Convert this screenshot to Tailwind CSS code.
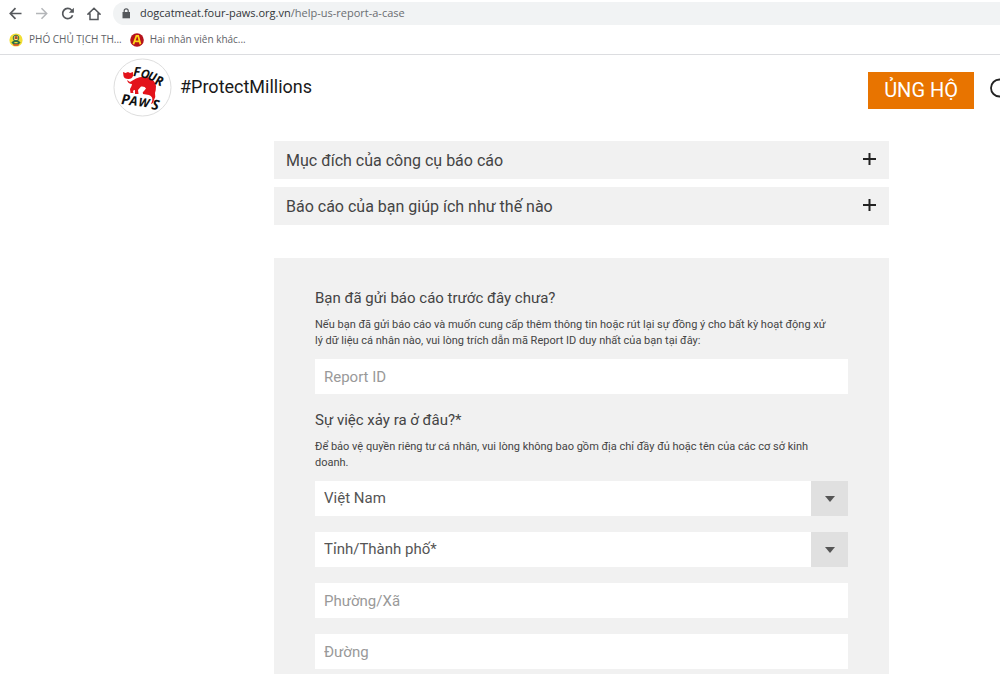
<!DOCTYPE html>
<html lang="vi">
<head>
    <meta charset="UTF-8">
    <meta name="viewport" content="width=device-width, initial-scale=1.0">
    <title>FOUR PAWS - Help us report a case</title>
    <script src="https://cdn.jsdelivr.net/npm/@tailwindcss/browser@4"></script>
</head>
<body class="min-h-screen flex flex-col bg-white text-[#444] font-[Roboto,sans-serif]">

    <!-- Browser toolbar -->
    <div class="shrink-0 border-b border-[#dcdde0] font-['Open_Sans',sans-serif]">
        <div class="h-[27px] flex items-center pl-[9px]">
            <div class="flex items-center gap-3 text-[#55585c]">
                <button aria-label="Back">
                    <svg class="w-[14px] h-[14px] block" viewBox="0 0 14 14" fill="none" stroke="currentColor" stroke-width="1.7"><path d="M12.5 6.5H2M6.5 1.2L1.3 6.5L6.5 11.8"/></svg>
                </button>
                <button aria-label="Forward" class="text-[#b4b6b9]">
                    <svg class="w-[14px] h-[14px] block" viewBox="0 0 14 14" fill="none" stroke="currentColor" stroke-width="1.5"><path d="M1 6.5H11.5M6.5 1.2L11.7 6.5L6.5 11.8"/></svg>
                </button>
                <button aria-label="Reload">
                    <svg class="w-[14px] h-[14px] block" viewBox="0 0 14 14" fill="none" stroke="currentColor" stroke-width="1.7"><path d="M11.6 8.2A5.1 5.1 0 1 1 10.6 3.2L12 4.5"/><path d="M12.9 .8V5.8H7.9Z" fill="currentColor" stroke="none"/></svg>
                </button>
                <button aria-label="Home">
                    <svg class="w-[14px] h-[14px] block" viewBox="0 0 14 14" fill="none" stroke="currentColor" stroke-width="1.5"><path d="M1 7.1L7 1.2L13 7.1H11V12.5H3V7.1Z"/></svg>
                </button>
            </div>
            <div class="flex-1 h-[23px] ml-3 pl-2 flex items-center gap-2 rounded-l-full bg-[#f1f3f4]">
                <svg class="w-[11px] h-3" viewBox="0 0 11 12" fill="#55585c"><path d="M1.5 4H9V10.3H1.5Z"/><path d="M3.2 4.5V2.8A2 2 0 0 1 7.2 2.8V4.5" fill="none" stroke="#55585c" stroke-width="1.2"/></svg>
                <span class="text-[11px] text-[#333639]">dogcatmeat.four-paws.org.vn<span class="text-[#6a6d71]">/help-us-report-a-case</span></span>
            </div>
        </div>
        <nav class="h-[27px] flex items-center pb-[2px] pl-[9px] gap-2 text-[10px] text-[#5f6368]">
            <a href="#" class="flex items-center gap-[6px]">
                <svg class="w-[14px] h-[14px]" viewBox="0 0 14 14"><circle cx="7" cy="7" r="6.6" fill="#f2df35"/><circle cx="7" cy="5" r="2.8" fill="#f7f08a" stroke="#2f6f45" stroke-width="1"/><path d="M5.6 4L7 2.6L8.6 4V6H5.6Z" fill="#b5502b"/><path d="M2.4 9.4L4.6 7.4H9.4L11.6 9.4L9.6 11.4H4.4Z" fill="#2f6f45"/><path d="M5.4 9H8.6V10.2H5.4Z" fill="#f2df35"/><path d="M3.8 11.2H10.2L9.2 12.8H4.8Z" fill="#d6442a"/></svg>
                <span>PHÓ CHỦ TỊCH TH...</span>
            </a>
            <a href="#" class="flex items-center gap-[6px]">
                <svg class="w-[14px] h-[14px]" viewBox="0 0 14 14"><circle cx="7" cy="7" r="6.8" fill="#b5121b"/><path d="M3.4 11.2L6.4 2.8H8.2L10.4 11.2M4.8 8.4H9.6" fill="none" stroke="#ffd71a" stroke-width="1.8"/></svg>
                <span>Hai nhân viên khác...</span>
            </a>
        </nav>
    </div>

    <!-- Site header -->
    <header class="shrink-0 h-[66px] flex items-center pl-[113px]">
        <a href="#" class="flex items-center gap-2 pb-[2px] text-[18px] text-[#1a1a1a]">
            <svg class="w-[59px] h-[59px] overflow-visible" viewBox="0 0 59 59" fill="none">
                <circle cx="29.5" cy="29.5" r="28.5" fill="#fff" stroke="#dedede"/>
                <!-- cat -->
                <path d="M10 14L12.5 15L15 14L17 15L20 14V18Q19 21 15.5 21Q11 21 10.5 18Z" fill="#e3131b"/>
                <path d="M14 22L17 24Q20 22 23 20.5Q29 17.5 36 19.5Q42 22 43 28Q43 32 42 35Q43 39 41 42Q40 46 38 46Q40 42 39 39.5Q38 37.500 36 37L30 36Q29 34 31 33L33 30.5Q32 28 28 28.5L25 32L25.5 36H22L22 32Q19 32 20.5 35H17.5L17 31Q19 28 19 26Q15 26 14 22Z" fill="#e3131b"/>
                <!-- brush lettering -->
                <g fill="#111" font-family="Open Sans, sans-serif" font-weight="700" font-style="italic">
                    <text x="20" y="18" transform="rotate(4 20 18)" font-size="13">F</text>
                    <text x="27" y="19" transform="rotate(14 27 19)" font-size="12">O</text>
                    <text x="34" y="21" transform="rotate(20 34 21)" font-size="12">U</text>
                    <text x="41" y="26" transform="rotate(18 41 26)" font-size="13">R</text>
                    <text x="8" y="46" transform="rotate(4 8 46)" font-size="14">P</text>
                    <text x="16" y="47" transform="rotate(6 16 47)" font-size="13">A</text>
                    <text x="25" y="48" transform="rotate(8 25 48)" font-size="12">W</text>
                    <text x="38" y="51" transform="rotate(10 38 51)" font-size="14">S</text>
                </g>
            </svg>
            <span class="pb-[2px]">#ProtectMillions</span>
        </a>
        <button class="ml-auto h-[37px] px-4 mt-1 bg-[#e87400] text-white text-[20px] leading-[37px]">ỦNG HỘ</button>
        <button aria-label="Search" class="ml-4 w-[10px] overflow-hidden">
            <svg class="w-[24px] h-[24px] max-w-none" viewBox="0 0 24 24" fill="none" stroke="#222" stroke-width="1.8"><circle cx="9.5" cy="12" r="8.5"/><path d="M16 18L22 24"/></svg>
        </button>
    </header>

    <main class="flex-1 flex flex-col pl-[274px] pr-[111px] pt-5">
        <!-- Accordion -->
        <div class="space-y-2 mb-[33px]">
            <button class="w-full h-[38px] px-3 flex items-center justify-between bg-[#f1f1f1] text-[16px]">
                <span class="pt-[2px]">Mục đích của công cụ báo cáo</span>
                <svg class="w-[14px] h-[14px]" viewBox="0 0 14 14" stroke="#222" stroke-width="2"><path d="M6.5 0V12M0 6H13"/></svg>
            </button>
            <button class="w-full h-[38px] px-3 flex items-center justify-between bg-[#f1f1f1] text-[16px]">
                <span class="pt-[2px]">Báo cáo của bạn giúp ích như thế nào</span>
                <svg class="w-[14px] h-[14px]" viewBox="0 0 14 14" stroke="#222" stroke-width="2"><path d="M6.5 0V12M0 6H13"/></svg>
            </button>
        </div>

        <!-- Report form -->
        <form class="flex-1 bg-[#f1f1f1] px-[41px] pt-[30px]">
            <label for="report-id" class="block text-[15px] leading-5">Bạn đã gửi báo cáo trước đây chưa?</label>
            <p class="mt-[9px] mb-[10px] text-[11px] leading-4">Nếu bạn đã gửi báo cáo và muốn cung cấp thêm thông tin hoặc rút lại sự đồng ý cho bất kỳ hoạt động xử<br>lý dữ liệu cá nhân nào, vui lòng trích dẫn mã Report ID duy nhất của bạn tại đây:</p>
            <input id="report-id" type="text" placeholder="Report ID" class="block w-full h-[35px] px-[9px] bg-white text-[15px] placeholder-[#999]">

            <label for="country" class="block mt-4 text-[15px] leading-5">Sự việc xảy ra ở đâu?*</label>
            <p class="mt-[9px] mb-[10px] text-[11px] leading-4">Để bảo vệ quyền riêng tư cá nhân, vui lòng không bao gồm địa chỉ đầy đủ hoặc tên của các cơ sở kinh<br>doanh.</p>
            <div class="space-y-4">
                <div class="relative">
                    <select id="country" class="appearance-none block w-full h-[35px] pl-[9px] pr-12 bg-white text-[15px] text-[#555]">
                        <option>Việt Nam</option>
                    </select>
                    <span class="absolute right-0 inset-y-0 w-[37px] flex items-center justify-center bg-[#e0e0e0] pointer-events-none">
                        <svg class="w-[10px] h-[6px]" viewBox="0 0 10 6" fill="#555"><path d="M0 0H10L5 6Z"/></svg>
                    </span>
                </div>
                <div class="relative">
                    <select aria-label="Tỉnh/Thành phố" class="appearance-none block w-full h-[35px] pl-[9px] pr-12 bg-white text-[15px] text-[#555]">
                        <option>Tỉnh/Thành phố*</option>
                    </select>
                    <span class="absolute right-0 inset-y-0 w-[37px] flex items-center justify-center bg-[#e0e0e0] pointer-events-none">
                        <svg class="w-[10px] h-[6px]" viewBox="0 0 10 6" fill="#555"><path d="M0 0H10L5 6Z"/></svg>
                    </span>
                </div>
                <input type="text" aria-label="Phường/Xã" placeholder="Phường/Xã" class="block w-full h-[35px] px-[9px] bg-white text-[15px] placeholder-[#999]">
                <input type="text" aria-label="Đường" placeholder="Đường" class="block w-full h-[35px] px-[9px] bg-white text-[15px] placeholder-[#999]">
            </div>
        </form>
    </main>
</body>
</html>
